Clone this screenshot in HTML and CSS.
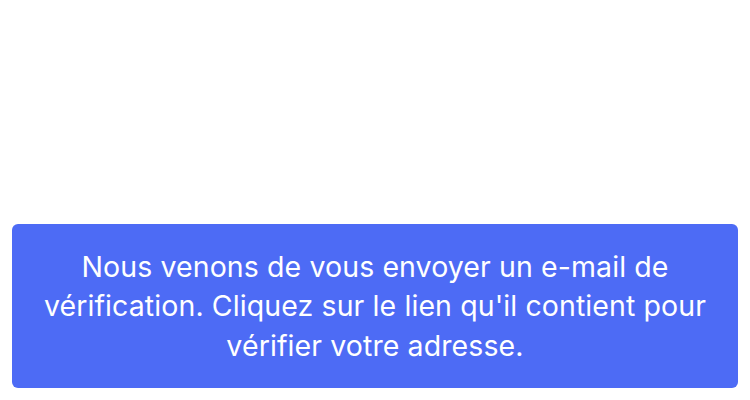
FILE: index.html
```html
<!DOCTYPE html>
<html lang="fr">
<head>
<meta charset="utf-8">
<link rel="stylesheet" href="styles.css">
</head>
<body>
<main class="screen">
  <div class="notice">
    <p class="notice-text">Nous venons de vous envoyer un e-mail de vérification. Cliquez sur le lien qu'il contient pour vérifier votre adresse.</p>
  </div>
</main>
</body>
</html>
```
FILE: styles.css
```css
html, body {
  margin: 0;
  padding: 0;
  background: #ffffff;
}
.screen {
  box-sizing: border-box;
  height: 400px;
  width: 750px;
  padding: 12px;
  display: flex;
  flex-direction: column;
  justify-content: flex-end;
}
.notice {
  background: #4d6bf5;
  border-radius: 6px;
  height: 164px;
  box-sizing: border-box;
  padding: 0 16px;
  display: flex;
  align-items: center;
  justify-content: center;
}
.notice-text {
  margin: 0;
  color: #ffffff;
  font-family: Inter, "Noto Sans", sans-serif;
  font-size: 28.5px;
  letter-spacing: 0.1px;
  line-height: 39.5px;
  text-align: center;
}
```
